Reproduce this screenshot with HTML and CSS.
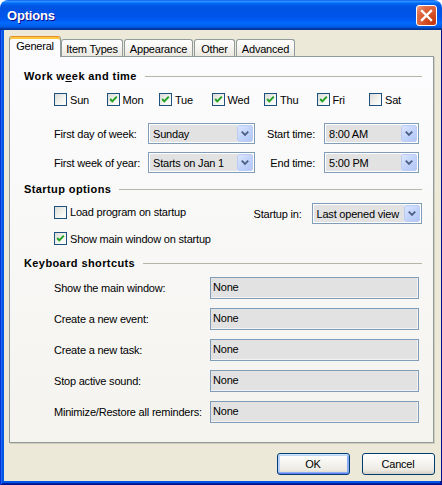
FILE: index.html
```html
<!DOCTYPE html>
<html>
<head>
<meta charset="utf-8">
<title>Options</title>
<link rel="stylesheet" href="styles.css">
</head>
<body>
<div class="window">
  <div class="titlebar">
    <span class="title">Options</span>
    <div class="close">
      <svg width="19" height="19" viewBox="0 0 19 19"><path d="M5 5 L14 14 M14 5 L5 14" stroke="#fff" stroke-width="2.4" stroke-linecap="square"/></svg>
    </div>
  </div>
  <div class="frame">
    <div class="client">
      <div class="tabs">
        <div class="tab active">General</div>
        <div class="tab tab-items">Item Types</div>
        <div class="tab tab-appearance">Appearance</div>
        <div class="tab tab-other">Other</div>
        <div class="tab tab-advanced">Advanced</div>
      </div>
      <div class="panel">
        <div class="group-head"><span class="group-title">Work w<u>e</u>ek and time</span><i class="rule"></i></div>
        <div class="days">
          <label class="check day"><span class="box"></span>Sun</label>
          <label class="check day"><span class="box"><svg width="11" height="11" viewBox="0 0 11 11"><path d="M2.2 5 L4.3 7.4 L8.8 2.6" fill="none" stroke="#21a121" stroke-width="1.9"/></svg></span>Mon</label>
          <label class="check day"><span class="box"><svg width="11" height="11" viewBox="0 0 11 11"><path d="M2.2 5 L4.3 7.4 L8.8 2.6" fill="none" stroke="#21a121" stroke-width="1.9"/></svg></span>Tue</label>
          <label class="check day"><span class="box"><svg width="11" height="11" viewBox="0 0 11 11"><path d="M2.2 5 L4.3 7.4 L8.8 2.6" fill="none" stroke="#21a121" stroke-width="1.9"/></svg></span>Wed</label>
          <label class="check day"><span class="box"><svg width="11" height="11" viewBox="0 0 11 11"><path d="M2.2 5 L4.3 7.4 L8.8 2.6" fill="none" stroke="#21a121" stroke-width="1.9"/></svg></span>Thu</label>
          <label class="check day"><span class="box"><svg width="11" height="11" viewBox="0 0 11 11"><path d="M2.2 5 L4.3 7.4 L8.8 2.6" fill="none" stroke="#21a121" stroke-width="1.9"/></svg></span>Fri</label>
          <label class="check day"><span class="box"></span>Sat</label>
        </div>
        <div class="field-row row-first">
          <span class="lbl-left">First day of week:</span>
          <div class="combo combo-day"><span class="combo-text">Sunday</span><span class="combo-btn"><svg width="15" height="17" viewBox="0 0 15 17"><path d="M4 6.5 L7.5 10 L11 6.5" fill="none" stroke="#4d6185" stroke-width="2"/></svg></span></div>
          <span class="lbl-right">Start time:</span>
          <div class="combo combo-time"><span class="combo-text">8:00 AM</span><span class="combo-btn"><svg width="15" height="17" viewBox="0 0 15 17"><path d="M4 6.5 L7.5 10 L11 6.5" fill="none" stroke="#4d6185" stroke-width="2"/></svg></span></div>
        </div>
        <div class="field-row row-second">
          <span class="lbl-left">First week of year:</span>
          <div class="combo combo-day"><span class="combo-text">Starts on Jan 1</span><span class="combo-btn"><svg width="15" height="17" viewBox="0 0 15 17"><path d="M4 6.5 L7.5 10 L11 6.5" fill="none" stroke="#4d6185" stroke-width="2"/></svg></span></div>
          <span class="lbl-right">End time:</span>
          <div class="combo combo-time"><span class="combo-text">5:00 PM</span><span class="combo-btn"><svg width="15" height="17" viewBox="0 0 15 17"><path d="M4 6.5 L7.5 10 L11 6.5" fill="none" stroke="#4d6185" stroke-width="2"/></svg></span></div>
        </div>

        <div class="group-head head-startup"><span class="group-title">Startup options</span><i class="rule"></i></div>
        <div class="startup-row">
          <label class="check load-check"><span class="box"></span>Load program on startup</label>
          <span class="startup-lbl">Startup in:</span>
          <div class="combo combo-view"><span class="combo-text">Last opened view</span><span class="combo-btn"><svg width="15" height="17" viewBox="0 0 15 17"><path d="M4 6.5 L7.5 10 L11 6.5" fill="none" stroke="#4d6185" stroke-width="2"/></svg></span></div>
        </div>
        <label class="check show-check"><span class="box"><svg width="11" height="11" viewBox="0 0 11 11"><path d="M2.2 5 L4.3 7.4 L8.8 2.6" fill="none" stroke="#21a121" stroke-width="1.9"/></svg></span>Show main window on startup</label>

        <div class="group-head head-keys"><span class="group-title">Keyboard shortcuts</span><i class="rule"></i></div>
        <div class="kb-list">
          <div class="kb-row"><span class="kb-lbl">Show the main window:</span><div class="kb-box">None</div></div>
          <div class="kb-row"><span class="kb-lbl">Create a new event:</span><div class="kb-box">None</div></div>
          <div class="kb-row"><span class="kb-lbl">Create a new task:</span><div class="kb-box">None</div></div>
          <div class="kb-row"><span class="kb-lbl">Stop active sound:</span><div class="kb-box">None</div></div>
          <div class="kb-row"><span class="kb-lbl">Minimize/Restore all reminders:</span><div class="kb-box">None</div></div>
        </div>
      </div>
      <div class="buttons">
        <div class="btn default">OK</div>
        <div class="btn">Cancel</div>
      </div>
    </div>
  </div>
</div>
</body>
</html>
```

FILE: styles.css
```css
* { box-sizing: border-box; }
html, body { margin: 0; padding: 0; background: #ffffff; }
body {
  font-family: "Liberation Sans", Arial, sans-serif;
  font-size: 11px;
  letter-spacing: -0.2px;
  color: #000;
}
.window {
  width: 442px;
  height: 485px;
  display: flex;
  flex-direction: column;
  border-radius: 8px 8px 0 0;
  overflow: hidden;
}
.titlebar {
  height: 30px;
  flex: none;
  display: flex;
  align-items: center;
  padding: 0 5px 0 7px;
  background: linear-gradient(to bottom,
    #0058ee 0%, #3593ff 4%, #288eff 6%, #127dff 8%, #036ffc 10%,
    #0262ee 14%, #0057e5 20%, #0054e3 24%, #0055eb 56%, #005bf5 66%,
    #026afe 76%, #0062ef 86%, #0052d6 92%, #0040ab 94%, #003092 100%);
}
.title {
  flex: 1;
  color: #fff;
  font-weight: bold;
  font-size: 13px;
  letter-spacing: -0.2px;
  text-shadow: 1px 1px 0 #0f1089;
  padding-top: 1px;
}
.close {
  width: 21px;
  height: 21px;
  border: 1px solid #fff;
  border-radius: 3px;
  background: radial-gradient(circle at 85% 85%, #c4360e 0%, #d8552b 45%, #e2704b 75%, #f3a58a 100%);
  display: flex;
  align-items: center;
  justify-content: center;
  margin-top: 1px;
}
.close svg { display: block; }
.frame {
  flex: 1;
  display: flex;
  padding: 0 4px 4px 4px;
  background: #0055e5;
  box-shadow: inset 1px 0 #0831d9, inset -1px 0 #00138c, inset 0 -1px #00138c, inset 2px 0 #166aee, inset -2px 0 #001ea0, inset 0 -2px #001ea0;
}
.client {
  flex: 1;
  display: flex;
  flex-direction: column;
  background: #ece9d8;
  padding: 6px 6px 6px 5px;
}
.tabs {
  height: 21px;
  display: flex;
  align-items: flex-end;
  margin-bottom: -1px;
  position: relative;
  z-index: 1;
}
.tab {
  height: 17px;
  margin-bottom: 1px;
  margin-right: 1px;
  border: 1px solid #919b9c;
  border-bottom: none;
  border-radius: 3px 3px 0 0;
  background: linear-gradient(to bottom, #ffffff 0%, #f6f5f1 50%, #eae8df 100%);
  display: flex;
  align-items: center;
  justify-content: center;
  padding-top: 1px;
}
.tab.active {
  width: 52px;
  height: 21px;
  margin-bottom: 0;
  margin-right: 0;
  background: #fcfcfe;
  border-top: 1px solid #e68b2c;
  box-shadow: inset 0 2px 0 #ffc73c;
  padding-top: 0;
  padding-bottom: 2px;
}
.tab-items { width: 62px; }
.tab-appearance { width: 69px; }
.tab-other { width: 41px; }
.tab-advanced { width: 59px; }
.panel {
  flex: 1;
  margin-right: 1px;
  border: 1px solid #919b9c;
  background: linear-gradient(to bottom, #fcfcfe 0%, #f4f3ee 100%);
  box-shadow: 1px 1px 0 #d0cdbc;
  padding: 12px 11px 0 14px;
  display: flex;
  flex-direction: column;
}
.group-head {
  height: 14px;
  display: flex;
  align-items: center;
}
.group-title {
  font-weight: bold;
  letter-spacing: 0.4px;
}
.rule {
  flex: 1;
  height: 1px;
  background: #b7b5a8;
  margin-left: 8px;
}
.check {
  display: flex;
  align-items: center;
  height: 13px;
  white-space: nowrap;
}
.box {
  width: 13px;
  height: 13px;
  flex: none;
  border: 1px solid #1c5180;
  background: linear-gradient(135deg, #dcdcd7 0%, #f4f4f0 60%, #ffffff 100%);
  margin-right: 3px;
  display: flex;
}
.box svg { display: block; }
.days {
  display: flex;
  margin: 10px 0 0 30px;
}
.day { width: 52.5px; }
.field-row {
  display: flex;
  align-items: center;
  height: 21px;
  margin-left: 30px;
}
.row-first { margin-top: 17px; }
.row-second { margin-top: 8px; }
.lbl-left { width: 94px; }
.lbl-right { width: 69px; text-align: right; padding-right: 9px; }
.combo {
  height: 21px;
  border: 1px solid #7f9db9;
  background: #ffffff;
  padding: 1px;
  display: flex;
}
.combo-day { width: 107px; }
.combo-time { width: 95px; }
.combo-view { width: 110px; }
.combo-text {
  flex: 1;
  background: #e2e2e2;
  padding-left: 3px;
  display: flex;
  align-items: center;
  white-space: nowrap;
  overflow: hidden;
}
.combo-btn {
  width: 16px;
  flex: none;
  border: 1px solid #bccbf2;
  border-radius: 2px;
  background: linear-gradient(135deg, #dbe6fe 0%, #c3d4fb 50%, #b2c7f7 100%);
  display: flex;
  align-items: center;
  justify-content: center;
}
.combo-btn svg { display: block; }
.head-startup { margin-top: 9px; }
.startup-row {
  display: flex;
  align-items: center;
  height: 21px;
  margin: 7px 0 0 30px;
}
.load-check { flex: 1; margin-bottom: 3px; }
.startup-lbl { margin-right: 10px; }
.show-check { margin: 8px 0 0 30px; }
.head-keys { margin-top: 11px; }
.kb-list {
  display: flex;
  flex-direction: column;
  gap: 9px;
  margin: 7px 0 0 30px;
}
.kb-row {
  display: flex;
  align-items: center;
  height: 22px;
}
.kb-lbl { width: 156px; }
.kb-box {
  width: 209px;
  height: 22px;
  border: 1px solid #7f9db9;
  background: #e2e2e2;
  box-shadow: inset -1px -1px 0 #f3f3f3;
  padding: 3px 0 0 2px;
  line-height: 13px;
}
.buttons {
  display: flex;
  justify-content: flex-end;
  gap: 12px;
  margin-top: 10px;
}
.btn {
  width: 73px;
  height: 22px;
  border: 1px solid #003c74;
  border-radius: 3px;
  background: linear-gradient(to bottom, #ffffff 0%, #f5f4ef 45%, #eceae2 80%, #d6d0c5 100%);
  display: flex;
  align-items: center;
  justify-content: center;
}
.btn.default {
  box-shadow: inset 0 1px 0 #cee7ff, inset 0 -1px 0 #6982ee, inset 1px 0 0 #b8d2fc, inset -1px 0 0 #89adf4,
              inset 0 2px 0 #bcd4f6, inset 0 -2px 0 #89adf4, inset 2px 0 0 #bcd4f6, inset -2px 0 0 #89adf4;
}
```
